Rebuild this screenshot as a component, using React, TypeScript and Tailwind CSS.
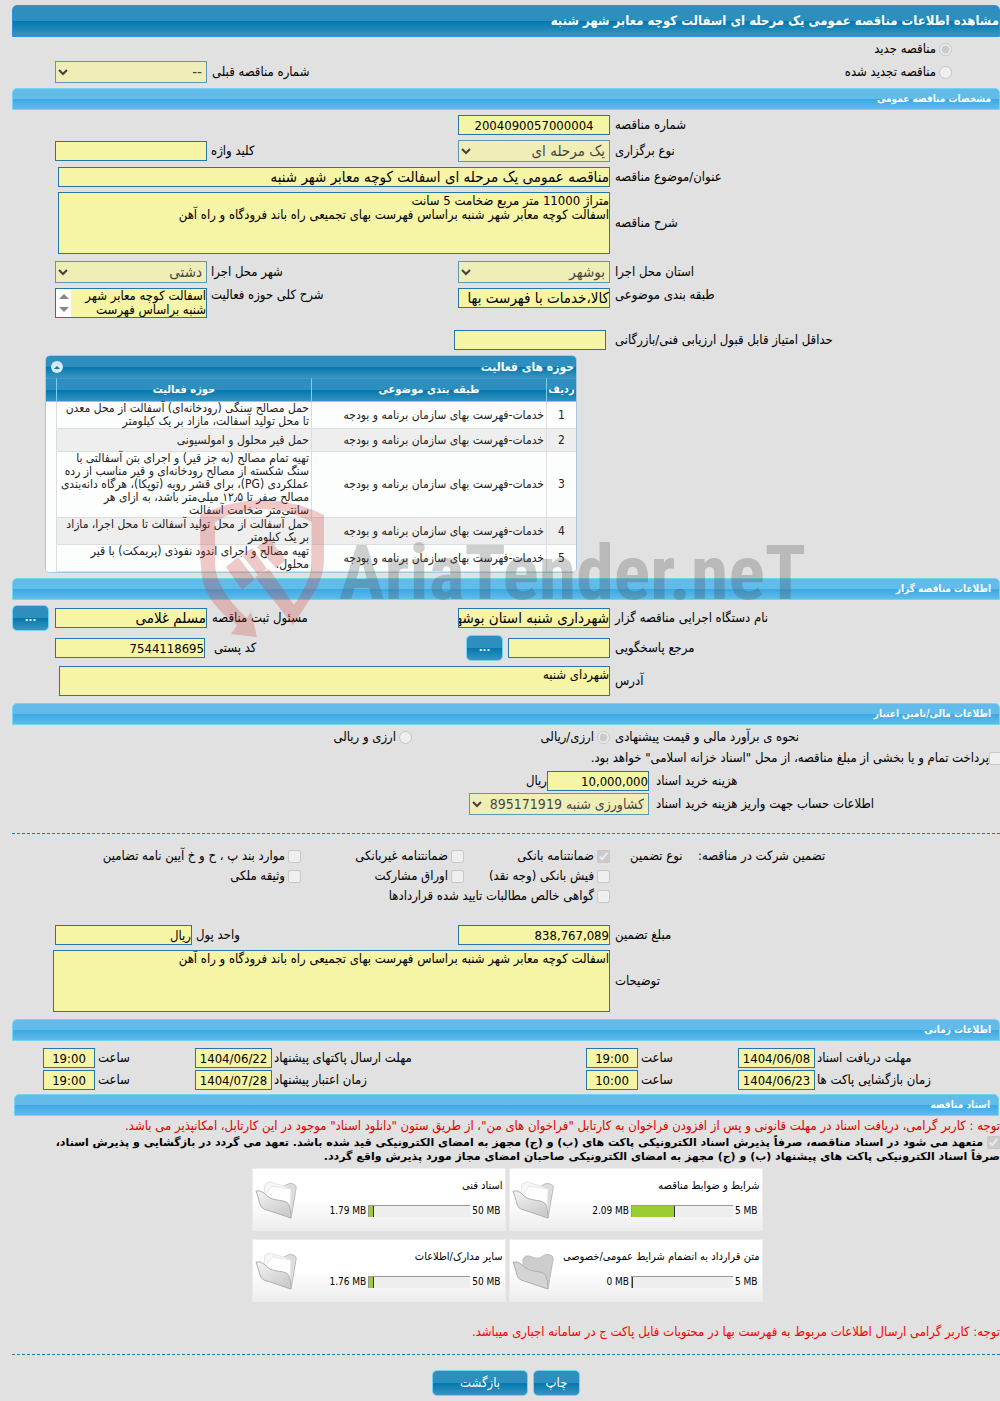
import type { ReactNode } from "react";

const inputBase =
  "h-5 rounded-none border border-[#2477a8] bg-[#f6f4a5] px-0 leading-[18px] text-black outline-none";
const areaBase =
  "block resize-none overflow-hidden rounded-none border border-[#2477a8] bg-[#f6f4a5] p-0 leading-[14px] text-black outline-none";
const selectBase =
  "h-[22px] rounded-none border border-[#2477a8] bg-[#f6f4a5] text-black opacity-70";
const glossy =
  "bg-[linear-gradient(to_bottom,#2e8fbe_0%,#2e8fbe_49%,#0078ae_50%,#3b94c0_100%)] text-white";
const fieldGrid = "grid grid-cols-[1fr_152px_251px_152px_55px] items-center";
const headCell = "border-t border-b border-l border-t-[#4297d7] border-b-[#74d2f5] border-l-[#74d2f5] p-0 text-[11px]";

const activities = [
  { id: 1, height: "h-[27px]", text: "حمل مصالح سنگی (رودخانه‌ای) آسفالت از محل معدن\nتا محل تولید آسفالت، مازاد بر یک کیلومتر" },
  { id: 2, height: "h-[23px]", text: "حمل قیر محلول و امولسیونی" },
  {
    id: 3,
    height: "h-[66px]",
    text: "تهیه تمام مصالح (به جز قیر) و اجرای بتن آسفالتی با\nسنگ شکسته از مصالح رودخانه‌ای و قیر مناسب از رده\nعملکردی (PG)، برای قشر رویه (توپکا)، هرگاه دانه‌بندی\nمصالح صفر تا ۱۲٫۵ میلی‌متر باشد، به ازای هر\nسانتی‌متر ضخامت آسفالت"
  },
  { id: 4, height: "h-[27px]", text: "حمل آسفالت از محل تولید آسفالت تا محل اجرا، مازاد\nبر یک کیلومتر" },
  { id: 5, height: "h-[27px]", text: "تهیه مصالح و اجرای اندود نفوذی (پریمکت) با قیر\nمحلول." }
];

const documents = [
  { title: "شرایط و ضوابط مناقصه", used: "2.09 MB", limit: "5 MB", percent: 43, filled: true },
  { title: "اسناد فنی", used: "1.79 MB", limit: "50 MB", percent: 5, filled: true },
  { title: "متن قرارداد به انضمام شرایط عمومی/خصوصی", used: "0 MB", limit: "5 MB", percent: 0, filled: false },
  { title: "سایر مدارک/اطلاعات", used: "1.76 MB", limit: "50 MB", percent: 5, filled: true }
];

function SectionBar({ children, className = "ml-3" }: { children: ReactNode; className?: string }) {
  return (
    <h2
      className={`${className} flex h-[22px] items-center rounded-t-[5px] border border-[#74d2f5] bg-[linear-gradient(to_bottom,#62bbe9_0%,#62bbe9_49%,#39a9e4_50%,#62bbe9_100%)] pr-2 text-[10px] font-bold text-white`}
    >
      {children}
    </h2>
  );
}

function Label({ htmlFor, children, className = "pl-[5px]" }: { htmlFor?: string; children: ReactNode; className?: string }) {
  return (
    <label htmlFor={htmlFor} className={`${className} whitespace-nowrap text-left`}>
      {children}
    </label>
  );
}

function Choice({
  type,
  name,
  checked = false,
  children,
  className = "gap-[3px]"
}: {
  type: "radio" | "checkbox";
  name?: string;
  checked?: boolean;
  children: ReactNode;
  className?: string;
}) {
  return (
    <label className={`${className} flex items-center whitespace-nowrap`}>
      <input type={type} name={name} defaultChecked={checked} disabled className="size-[13px] shrink-0" />
      {children}
    </label>
  );
}

function MoreButton({ label }: { label: string }) {
  return (
    <button
      type="button"
      aria-label={label}
      className={`${glossy} h-[26px] w-[37px] rounded-[5px] border border-[#74d2f5] text-[11px] font-bold`}
    >
      ...
    </button>
  );
}

function DateRow({
  rows
}: {
  rows: { id: string; label: string; date: string; time: string }[];
}) {
  return (
    <div className="grid grid-cols-[1fr_229px_314px_229px_43px] items-center">
      {rows.map((row) => (
        <div key={row.id} className="contents">
          <Label htmlFor={row.id} className="pl-[2px]">
            {row.label}
          </Label>
          <div className="flex items-center">
            <input id={row.id} readOnly defaultValue={row.date} className={`${inputBase} w-[77px] text-center text-[13px]`} />
            <Label htmlFor={`${row.id}-time`} className="flex-1 pl-[3px]">
              ساعت
            </Label>
            <input
              id={`${row.id}-time`}
              readOnly
              defaultValue={row.time}
              className={`${inputBase} w-[52px] text-center text-[13px]`}
            />
          </div>
        </div>
      ))}
    </div>
  );
}

function FolderIcon({ filled }: { filled: boolean }) {
  return (
    <svg viewBox="0 0 43 38" className="h-[38px] w-[43px]" aria-hidden="true">
      <defs>
        <linearGradient id="flap" x1="0" y1="0" x2="0.6" y2="1">
          <stop offset="0" stopColor="#f4f4f4" />
          <stop offset="1" stopColor="#cccccc" />
        </linearGradient>
      </defs>
      <path
        d="M11 12 L11 7 Q13 3 17 4 L23 6 Q28 7 31 4 Q35 1 38 3 Q42 4 41 8 L36 37 L12 28 Z"
        fill={filled ? "#dcdcdc" : "#cdcdcd"}
        stroke="#bcbcbc"
      />
      {filled && (
        <>
          <path d="M9 12 L10 3 L15 1 L32 6 L34 27 L12 24 Z" fill="#f7f7f7" stroke="#e4e4e4" />
          <path d="M11 13 L17 5 L36 8 L35 28 L16 24 Z" fill="#ffffff" stroke="#e6e6e6" />
        </>
      )}
      <path
        d="M1 10 Q6 9 9 12 Q14 18 22 19 Q33 20 34 24 Q36 29 36 37 L9 28 Q6 27 5 23 Q3 15 1 10 Z"
        fill={filled ? "url(#flap)" : "#d4d4d4"}
        stroke="#b0b0b0"
      />
    </svg>
  );
}

function DocumentCard({ title, used, limit, percent, filled }: (typeof documents)[number]) {
  return (
    <div className="flex h-[63px] w-[254px] items-center justify-between border border-[#ececec] bg-[linear-gradient(to_bottom,#ffffff_50%,#ededed_100%)] px-[2px] text-[10px]">
      <div className="flex flex-col gap-3 pb-[3px]">
        <div className="text-[11px] leading-[14px] whitespace-nowrap">{title}</div>
        <div className="flex items-center gap-[2px] pr-[2px] leading-[12px]">
          <span dir="ltr">{limit}</span>
          <div dir="ltr" className="h-3 w-[102px] border-t border-l border-[#999] bg-[#eee]">
            <div className="h-full border-r border-[#333] bg-[#9acd32]" style={{ width: `${percent}%` }} />
          </div>
          <span dir="ltr">{used}</span>
        </div>
      </div>
      <FolderIcon filled={filled} />
    </div>
  );
}

function Watermark() {
  return (
    <div dir="ltr" aria-hidden="true" className="pointer-events-none absolute top-[495px] left-[200px] flex opacity-25">
      <svg viewBox="0 0 125 143" className="h-[143px] w-[125px]" fill="#cc3030">
        <path
          fillRule="evenodd"
          d="M0 20 Q30 5 62 5 Q94 5 124 20 V66 Q124 84 110 104 L93 130 L55 82 L69 74 L94 110 Q112 84 112 65 V27 Q88 14 62 14 Q36 14 15 27 V70 Q17 96 47 123 L51 117 L57 142 L31 139 L37 130 Q6 108 2 82 Q0 72 0 20 Z"
        />
        <path d="M26 72 L38 62 L55 84 L42 95 Z M42 60 L52 53 L67 74 L58 80 Z M57 52 L69 43 L86 65 L76 73 Z" />
      </svg>
      <span className="pt-[28px] pl-[14px] font-['Roboto_Condensed','Open_Sans_Condensed','Liberation_Sans',sans-serif] text-[76px] leading-[100px] font-bold text-[#444]">
        AriaTender.neT
      </span>
    </div>
  );
}

export default function App() {
  return (
    <main
      dir="rtl"
      lang="fa"
      className="relative min-h-screen overflow-hidden bg-[#e1e1e1] pt-[5px] pb-[5px] font-['DejaVu_Sans_Condensed','DejaVu_Sans',sans-serif] text-[13px] leading-[14px] text-black"
    >
      <h1 className={`${glossy} ml-3 flex h-8 items-center rounded-t-[5px] border border-[#2a8fe0] text-[13px] font-bold whitespace-nowrap`}>
        مشاهده اطلاعات مناقصه عمومی یک مرحله ای اسفالت کوچه معابر شهر شنبه
      </h1>

      <div className="flex h-6 items-center pr-12">
        <Choice type="radio" name="tender-kind" checked>
          مناقصه جدید
        </Choice>
      </div>
      <div className="flex h-[22px] items-center pr-12 pl-[55px]">
        <Choice type="radio" name="tender-kind">
          مناقصه تجدید شده
        </Choice>
        <Label htmlFor="previous" className="flex-1 pl-[5px]">
          شماره مناقصه قبلی
        </Label>
        <select id="previous" disabled className={`${selectBase} w-[152px] text-[15px]`}>
          <option>--</option>
        </select>
      </div>

      <SectionBar className="mt-[5px] ml-3">مشخصات مناقصه عمومی</SectionBar>
      <div className={`${fieldGrid} mt-[5px]`}>
        <Label htmlFor="number">شماره مناقصه</Label>
        <input id="number" readOnly defaultValue="2004090057000004" className={`${inputBase} text-center text-[13px]`} />
      </div>
      <div className={`${fieldGrid} mt-[5px]`}>
        <Label htmlFor="method">نوع برگزاری</Label>
        <select id="method" disabled className={`${selectBase} text-[15px]`}>
          <option>یک مرحله ای</option>
        </select>
        <Label htmlFor="keyword" className="pl-1">
          کلید واژه
        </Label>
        <input id="keyword" readOnly className={inputBase} />
      </div>
      <div className="mt-[5px] grid grid-cols-[1fr_552px_58px] items-center gap-y-[5px]">
        <Label htmlFor="subject">عنوان/موضوع مناقصه</Label>
        <input
          id="subject"
          readOnly
          defaultValue="مناقصه عمومی یک مرحله ای اسفالت کوچه معابر شهر شنبه"
          className={`${inputBase} text-[15px]`}
        />
        <Label htmlFor="description" className="col-start-1 pl-[5px]">
          شرح مناقصه
        </Label>
        <textarea
          id="description"
          readOnly
          defaultValue={"متراژ 11000 متر مربع ضخامت 5 سانت\nاسفالت کوچه معابر شهر شنبه براساس فهرست بهای تجمیعی راه باند فرودگاه و راه آهن"}
          className={`${areaBase} h-[62px] pt-px`}
        />
      </div>
      <div className={`${fieldGrid} mt-[7px]`}>
        <Label htmlFor="province">استان محل اجرا</Label>
        <select id="province" disabled className={`${selectBase} text-[15px]`}>
          <option>بوشهر</option>
        </select>
        <Label htmlFor="city" className="pl-1">
          شهر محل اجرا
        </Label>
        <select id="city" disabled className={`${selectBase} text-[15px]`}>
          <option>دشتی</option>
        </select>
      </div>
      <div className="mt-[5px] grid grid-cols-[1fr_152px_251px_152px_55px] items-start">
        <Label htmlFor="category">طبقه بندی موضوعی</Label>
        <input id="category" readOnly defaultValue="کالا،خدمات با فهرست بها" className={`${inputBase} text-[15px]`} />
        <Label htmlFor="scope" className="pl-1">
          شرح کلی حوزه فعالیت
        </Label>
        <div className="flex h-[30px] border border-[#2477a8] bg-[#f6f4a5]">
          <textarea
            id="scope"
            readOnly
            defaultValue={"اسفالت کوچه معابر شهر\nشنبه براساس فهرست"}
            className="min-w-0 flex-1 resize-none overflow-hidden leading-[14px] outline-none"
          />
          <div className="flex w-[15px] flex-col items-center justify-between bg-white py-[5px]">
            <span className="border-x-[5px] border-b-[5px] border-x-transparent border-b-[#888]" />
            <span className="border-x-[5px] border-t-[5px] border-x-transparent border-t-[#888]" />
          </div>
        </div>
      </div>
      <div className="mt-3 grid grid-cols-[1fr_152px_454px] items-center">
        <Label htmlFor="score" className="pl-[9px]">
          حداقل امتیاز قابل قبول ارزیابی فنی/بازرگانی
        </Label>
        <input id="score" readOnly className={inputBase} />
      </div>

      <div className="mt-[5px] ml-[45px] flex justify-end">
        <section className="w-[532px] overflow-hidden rounded-[5px] border border-[#a6c9e2] bg-[#fcfdfd]">
          <header className={`${glossy} flex h-[22px] items-center justify-between pr-[2px] pl-[5px]`}>
            <h3 className="text-xs font-bold">حوزه های فعالیت</h3>
            <button type="button" aria-label="بستن جدول" className="flex size-3 items-center justify-center rounded-full bg-[#d8e7f3]">
              <span className="border-x-[3px] border-b-[3px] border-x-transparent border-b-[#0078ae]" />
            </button>
          </header>
          <table className="w-full table-fixed border-separate border-spacing-0">
            <colgroup>
              <col className="w-[30px]" />
              <col className="w-[235px]" />
              <col className="w-[255px]" />
              <col />
            </colgroup>
            <thead>
              <tr className={`${glossy} h-6`}>
                <th className={headCell}>ردیف</th>
                <th className={headCell}>طبقه بندی موضوعی</th>
                <th className={headCell}>حوزه فعالیت</th>
                <th className="border-t border-b border-t-[#4297d7] border-b-[#74d2f5]" />
              </tr>
            </thead>
            <tbody className="text-xs leading-[13px] whitespace-pre text-[#222]">
              {activities.map((item) => (
                <tr key={item.id} className={`${item.height} ${item.id % 2 === 0 ? "bg-[#eee]" : "bg-[#fcfdfd]"}`}>
                  <td className="border-b border-l border-[#ddd] p-0 text-center">{item.id}</td>
                  <td className="border-b border-l border-[#ddd] p-0 pr-[2px]">خدمات-فهرست بهای سازمان برنامه و بودجه</td>
                  <td className="border-b border-l border-[#ddd] p-0 pr-[2px]">{item.text}</td>
                  <td className="bg-[#fcfdfd] p-0" />
                </tr>
              ))}
            </tbody>
          </table>
        </section>
      </div>

      <SectionBar className="mt-[5px] ml-3">اطلاعات مناقصه گزار</SectionBar>
      <div className="mt-[5px] grid grid-cols-[1fr_152px_251px_152px_43px_12px] items-center">
        <Label htmlFor="agency">نام دستگاه اجرایی مناقصه گزار</Label>
        <input id="agency" readOnly defaultValue="شهرداری شنبه استان بوشهر" className={`${inputBase} text-[15px]`} />
        <Label htmlFor="registrar">مسئول ثبت مناقصه</Label>
        <input id="registrar" readOnly defaultValue="مسلم غلامی" className={`${inputBase} text-[15px]`} />
        <div className="flex justify-end">
          <MoreButton label="انتخاب مسئول ثبت" />
        </div>
      </div>
      <div className="mt-1 grid grid-cols-[1fr_144px_261px_150px_55px] items-center">
        <Label htmlFor="contact">مرجع پاسخگویی</Label>
        <div className="flex items-center gap-[5px]">
          <input id="contact" readOnly className={`${inputBase} w-[102px]`} />
          <MoreButton label="انتخاب مرجع پاسخگویی" />
        </div>
        <Label htmlFor="postal" className="pl-[9px]">
          کد پستی
        </Label>
        <input id="postal" readOnly defaultValue="7544118695" className={`${inputBase} text-[13px]`} />
      </div>
      <div className="mt-[5px] grid grid-cols-[1fr_551px_59px] items-center">
        <Label htmlFor="address">آدرس</Label>
        <textarea id="address" readOnly defaultValue="شهردای شنبه" className={`${areaBase} h-[30px] pt-px`} />
      </div>

      <SectionBar className="mt-[7px] ml-3">اطلاعات مالی/تامین اعتبار</SectionBar>
      <div className="grid h-6 grid-cols-[1fr_198px_412px] items-center">
        <span className="pl-[5px] text-left">نحوه ی برآورد مالی و قیمت پیشنهادی</span>
        <Choice type="radio" name="estimate" checked>
          ارزی/ریالی
        </Choice>
        <Choice type="radio" name="estimate">
          ارزی و ریالی
        </Choice>
      </div>
      <Choice type="checkbox" className="-mr-[2px] h-[18px]">
        پرداخت تمام و یا بخشی از مبلغ مناقصه، از محل "اسناد خزانه اسلامی" خواهد بود.
      </Choice>
      <div className="mt-1 grid grid-cols-[1fr_102px_547px] items-center">
        <Label htmlFor="cost" className="pl-[7px]">
          هزینه خرید اسناد
        </Label>
        <input id="cost" readOnly defaultValue="10,000,000" className={`${inputBase} text-[13px]`} />
        <span>ریال</span>
      </div>
      <div className="mt-[2px] grid grid-cols-[1fr_180px_469px] items-center">
        <Label htmlFor="account" className="pl-[7px]">
          اطلاعات حساب جهت واریز هزینه خرید اسناد
        </Label>
        <select id="account" disabled className={`${selectBase} text-[14px]`}>
          <option>کشاورزی شنبه 895171919</option>
        </select>
      </div>

      <div className="mt-[18px] ml-3 border-t border-dashed border-[#2477a8]" />
      <div className="mt-3 grid grid-cols-[1fr_68px_20px_146px_163px_301px] items-center *:h-5">
        <span className="flex items-center justify-end">تضمین شرکت در مناقصه:</span>
        <span className="flex items-center justify-end whitespace-nowrap">نوع تضمین</span>
        <span />
        <Choice type="checkbox" checked>
          ضمانتنامه بانکی
        </Choice>
        <Choice type="checkbox">ضمانتنامه غیربانکی</Choice>
        <Choice type="checkbox">موارد بند پ ، ح و خ آیین نامه تضامین</Choice>
        <Choice type="checkbox" className="col-start-4 gap-[3px]">
          فیش بانکی (وجه نقد)
        </Choice>
        <Choice type="checkbox">اوراق مشارکت</Choice>
        <Choice type="checkbox">وثیقه ملکی</Choice>
        <Choice type="checkbox" className="col-span-2 col-start-4 gap-[3px]">
          گواهی خالص مطالبات تایید شده قراردادها
        </Choice>
      </div>
      <div className="mt-[19px] grid grid-cols-[1fr_152px_266px_137px_55px] items-center">
        <Label htmlFor="amount">مبلغ تضمین</Label>
        <input id="amount" readOnly defaultValue="838,767,089" className={`${inputBase} text-[13px]`} />
        <Label htmlFor="currency" className="pl-1">
          واحد پول
        </Label>
        <input id="currency" readOnly defaultValue="ریال" className={`${inputBase} text-[13px]`} />
      </div>
      <div className="mt-[5px] grid grid-cols-[1fr_557px_53px] items-center">
        <Label htmlFor="notes">توضیحات</Label>
        <textarea
          id="notes"
          readOnly
          defaultValue="اسفالت کوچه معابر شهر شنبه براساس فهرست بهای تجمیعی راه باند فرودگاه و راه آهن"
          className={`${areaBase} h-[62px] pt-px`}
        />
      </div>

      <SectionBar className="mt-[7px] ml-3">اطلاعات زمانی</SectionBar>
      <div className="mt-[7px] flex flex-col gap-[2px]">
        <DateRow
          rows={[
            { id: "receive", label: "مهلت دریافت اسناد", date: "1404/06/08", time: "19:00" },
            { id: "submit", label: "مهلت ارسال پاکتهای پیشنهاد", date: "1404/06/22", time: "19:00" }
          ]}
        />
        <DateRow
          rows={[
            { id: "opening", label: "زمان بازگشایی پاکت ها", date: "1404/06/23", time: "10:00" },
            { id: "validity", label: "زمان اعتبار پیشنهاد", date: "1404/07/28", time: "19:00" }
          ]}
        />
      </div>

      <SectionBar className="mt-1 mr-px ml-[14px]">اسناد مناقصه</SectionBar>
      <p className="leading-5 whitespace-nowrap text-[#e00000]">
        توجه : کاربر گرامی، دریافت اسناد در مهلت قانونی و پس از افزودن فراخوان به کارتابل "فراخوان های من"، از طریق ستون "دانلود اسناد" موجود در این کارتابل، امکانپذیر می باشد.
      </p>
      <label className="block h-7 font-['DejaVu_Sans',sans-serif] text-[11px] font-bold whitespace-nowrap">
        <input type="checkbox" defaultChecked disabled className="ml-1 size-[13px] align-top" />
        متعهد می شود در اسناد مناقصه، صرفاً پذیرش اسناد الکترونیکی پاکت های (ب) و (ج) مجهز به امضای الکترونیکی قید شده باشد. تعهد می گردد در بازگشایی و پذیرش اسناد،
        <br />
        صرفاً اسناد الکترونیکی پاکت های پیشنهاد (ب) و (ج) مجهز به امضای الکترونیکی صاحبان امضای مجاز مورد پذیرش واقع گردد.
      </label>

      <div className="mt-1 grid grid-cols-[254px_254px] justify-center gap-x-[3px] gap-y-2 pl-[14px]">
        {documents.map((doc) => (
          <DocumentCard key={doc.title} {...doc} />
        ))}
      </div>

      <p className="mt-5 leading-5 whitespace-nowrap text-[#ff0000]">
        توجه: کاربر گرامی ارسال اطلاعات مربوط به فهرست بها در محتویات فایل پاکت ج در سامانه اجباری میباشد.
      </p>
      <div className="mt-3 ml-3 border-t border-dashed border-[#2477a8]" />
      <div className="mt-[15px] flex justify-center gap-[5px] pl-3">
        <button type="button" className={`${glossy} h-[26px] w-[47px] rounded-[5px] border border-[#74d2f5]`}>
          چاپ
        </button>
        <button type="button" className={`${glossy} h-[26px] w-24 rounded-[5px] border border-[#74d2f5]`}>
          بازگشت
        </button>
      </div>

      <Watermark />
    </main>
  );
}
